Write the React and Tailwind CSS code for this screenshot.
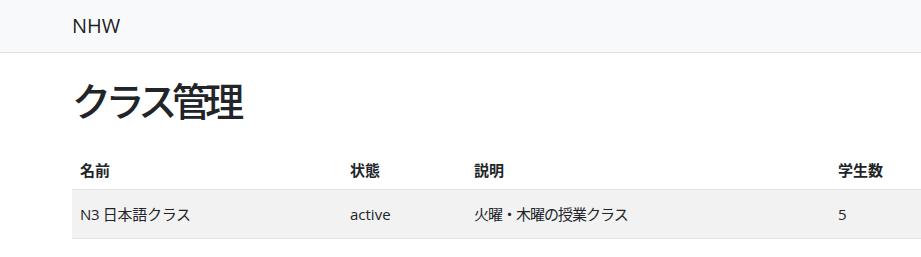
import React from "react";

const classes = [
  { name: "N3 日本語クラス", status: "active", description: "火曜・木曜の授業クラス", students: 5 },
];

const App = () => {
  return (
    <div className="min-h-screen overflow-hidden bg-white text-[#212529] font-['Open_Sans','Noto_Sans_CJK_JP',sans-serif]">
      <nav className="h-[53px] bg-[#f8f9fa] border-b border-[#dee2e6] flex items-center pl-[72px]">
        <span className="text-[20px] text-black/90 leading-none">NHW</span>
      </nav>
      <main className="pl-[72px] pt-[25px]">
        <h1 className="text-[39px] font-medium leading-[1.2] tracking-[-5.5px] mb-[26px]">クラス管理</h1>
        <table className="w-[960px] text-[15px] border-collapse">
          <thead>
            <tr className="border-b border-[#dee2e6]">
              <th className="w-[270px] text-left font-bold px-2 py-[7px] leading-6">名前</th>
              <th className="w-[124px] text-left font-bold px-2 py-[7px] leading-6">状態</th>
              <th className="w-[364px] text-left font-bold px-2 py-[7px] leading-6">説明</th>
              <th className="text-left font-bold px-2 py-[7px] leading-6">学生数</th>
            </tr>
          </thead>
          <tbody>
            {classes.map((c) => (
              <tr key={c.name} className="bg-[#f2f2f2] border-b border-[#dee2e6]">
                <td className="px-2 py-3 leading-6 tracking-[-0.3px]">{c.name}</td>
                <td className="px-2 py-3 leading-6">{c.status}</td>
                <td className="px-2 py-3 leading-6 tracking-[-1px]">{c.description}</td>
                <td className="px-2 py-3 leading-6">{c.students}</td>
              </tr>
            ))}
          </tbody>
        </table>
      </main>
    </div>
  );
};

export default App;
